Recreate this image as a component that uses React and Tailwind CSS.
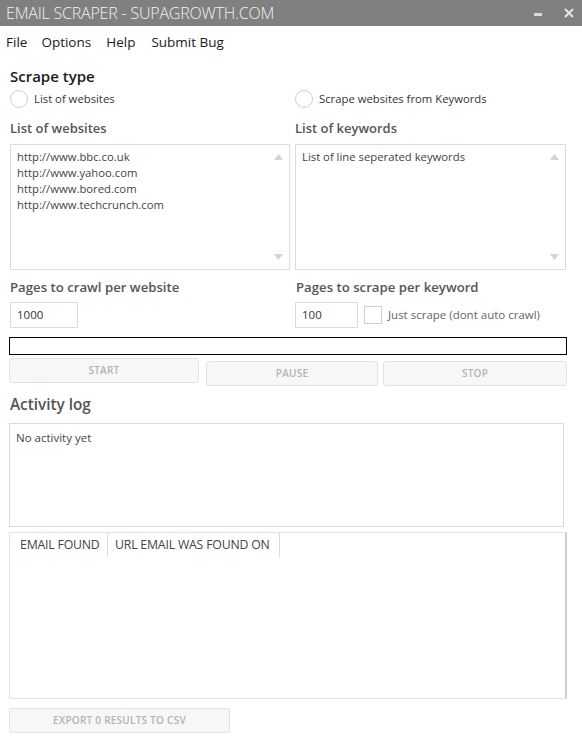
import React from 'react';

const font = { fontFamily: '"Open Sans", "Noto Sans", sans-serif' };

const Radio = ({ label }) => (
  <div className="flex items-center gap-[6px]">
    <span className="w-[18px] h-[18px] rounded-full border border-[#cfcfcf] bg-white" />
    <span className="text-[11.3px] text-[#333]">{label}</span>
  </div>
);

const Arrows = () => (
  <div className="absolute right-[6px] top-[9px] bottom-[9px] flex flex-col justify-between">
    <svg width="9" height="6" viewBox="0 0 9 6"><path d="M0 6 L4.5 0 L9 6 Z" fill="#d4d4d4" /></svg>
    <svg width="9" height="6" viewBox="0 0 9 6"><path d="M0 0 L4.5 6 L9 0 Z" fill="#d4d4d4" /></svg>
  </div>
);

const TextBox = ({ lines }) => (
  <div className="relative h-[126px] border border-[#dcdcdc] bg-white px-[6px] pt-[4px] text-[11.3px] leading-[16px] text-[#444]">
    {lines.map((l) => (
      <div key={l}>{l}</div>
    ))}
    <Arrows />
  </div>
);

const Btn = ({ label, className }) => (
  <button
    type="button"
    className={`h-[25px] rounded-[3px] border border-[#e2e2e2] bg-[#f7f7f7] text-[10px] font-semibold tracking-wide text-[#b3b3b3] ${className}`}
  >
    {label}
  </button>
);

export default function App() {
  return (
    <div className="w-[582px] h-[743px] bg-white overflow-hidden relative" style={font}>
      {/* title bar */}
      <div className="h-[26px] bg-[#808080] flex items-center justify-between pl-[6px] pr-[6px]">
        <span className="text-[16px] font-light text-[#f2f2f2] leading-none tracking-[-0.2px]">EMAIL SCRAPER - SUPAGROWTH.COM</span>
        <div className="flex items-center gap-[22px] pr-[2px]">
          <span className="w-[8px] h-[3px] bg-[#d9d9d9] mt-[3px]" />
          <svg width="10" height="10" viewBox="0 0 10 10">
            <path d="M1 1 L9 9 M9 1 L1 9" stroke="#e6e6e6" strokeWidth="2" />
          </svg>
        </div>
      </div>

      {/* menu */}
      <div className="flex items-center pl-[6px] h-[32px] text-[13.5px] text-[#1a1a1a]">
        <span>File</span>
        <span className="ml-[14px]">Options</span>
        <span className="ml-[15px]">Help</span>
        <span className="ml-[16px]">Submit Bug</span>
      </div>

      <div className="pl-[10px] pr-[16px]">
        <div className="text-[15px] font-semibold text-[#1a1a1a] leading-[20px] mt-[8px]">Scrape type</div>
        <div className="grid grid-cols-[280px_1fr] gap-[5px] mt-[4px]">
          <Radio label="List of websites" />
          <Radio label="Scrape websites from Keywords" />
        </div>

        <div className="grid grid-cols-[280px_1fr] gap-[5px] mt-[10px]">
          <div>
            <div className="text-[13px] font-semibold text-[#555] leading-[20px]">List of websites</div>
            <div className="mt-[6px]">
              <TextBox lines={['http://www.bbc.co.uk', 'http://www.yahoo.com', 'http://www.bored.com', 'http://www.techcrunch.com']} />
            </div>
          </div>
          <div>
            <div className="text-[13px] font-semibold text-[#555] leading-[20px]">List of keywords</div>
            <div className="mt-[6px]">
              <TextBox lines={['List of line seperated keywords']} />
            </div>
          </div>
        </div>

        <div className="grid grid-cols-[280px_1fr] gap-[5px] mt-[7px]">
          <div>
            <div className="text-[13.2px] font-semibold text-[#555] leading-[20px]">Pages to crawl per website</div>
            <div className="mt-[5px] w-[68px] h-[26px] border border-[#dcdcdc] px-[6px] text-[11.5px] leading-[24px] text-[#333]">1000</div>
          </div>
          <div className="pl-[1px]">
            <div className="text-[13.2px] font-semibold text-[#555] leading-[20px]">Pages to scrape per keyword</div>
            <div className="mt-[5px] flex items-center gap-[6px] -ml-[1px]">
              <div className="w-[63px] h-[26px] border border-[#dcdcdc] px-[6px] text-[11.5px] leading-[24px] text-[#333]">100</div>
              <span className="w-[18px] h-[18px] border border-[#cfcfcf] bg-white" />
              <span className="text-[11.5px] text-[#666]">Just scrape (dont auto crawl)</span>
            </div>
          </div>
        </div>
      </div>

      <div className="pl-[9px] pr-[15px]">
        <div className="mt-[9px] h-[18px] border border-black bg-white" />
        <div className="flex items-start mt-[3px]">
          <Btn label="START" className="w-[190px]" />
          <Btn label="PAUSE" className="w-[172px] ml-[7px] mt-[3px]" />
          <Btn label="STOP" className="w-[184px] ml-[5px] mt-[3px]" />
        </div>

        <div className="text-[15.3px] font-semibold text-[#555] leading-[20px] mt-[8px] pl-[1px]">Activity log</div>
        <div className="mt-[9px] mr-[3px] h-[104px] border border-[#dcdcdc] px-[6px] pt-[5px] text-[11.5px] text-[#444]">No activity yet</div>

        <div className="mt-[5px] h-[167px] border border-[#e2e2e2] border-r-[#cfcfcf] border-r-2">
          <div className="flex h-[24px] items-center text-[12.3px] text-[#444] font-normal tracking-[-0.2px]">
            <div className="w-[98px] h-full pl-[10px] flex items-center border-r border-[#dcdcdc]">EMAIL FOUND</div>
            <div className="w-[172px] h-full pl-[7px] flex items-center border-r border-[#dcdcdc]">URL EMAIL WAS FOUND ON</div>
          </div>
        </div>

        <Btn label="EXPORT 0 RESULTS TO CSV" className="w-[221px] mt-[9px]" />
      </div>
    </div>
  );
}
